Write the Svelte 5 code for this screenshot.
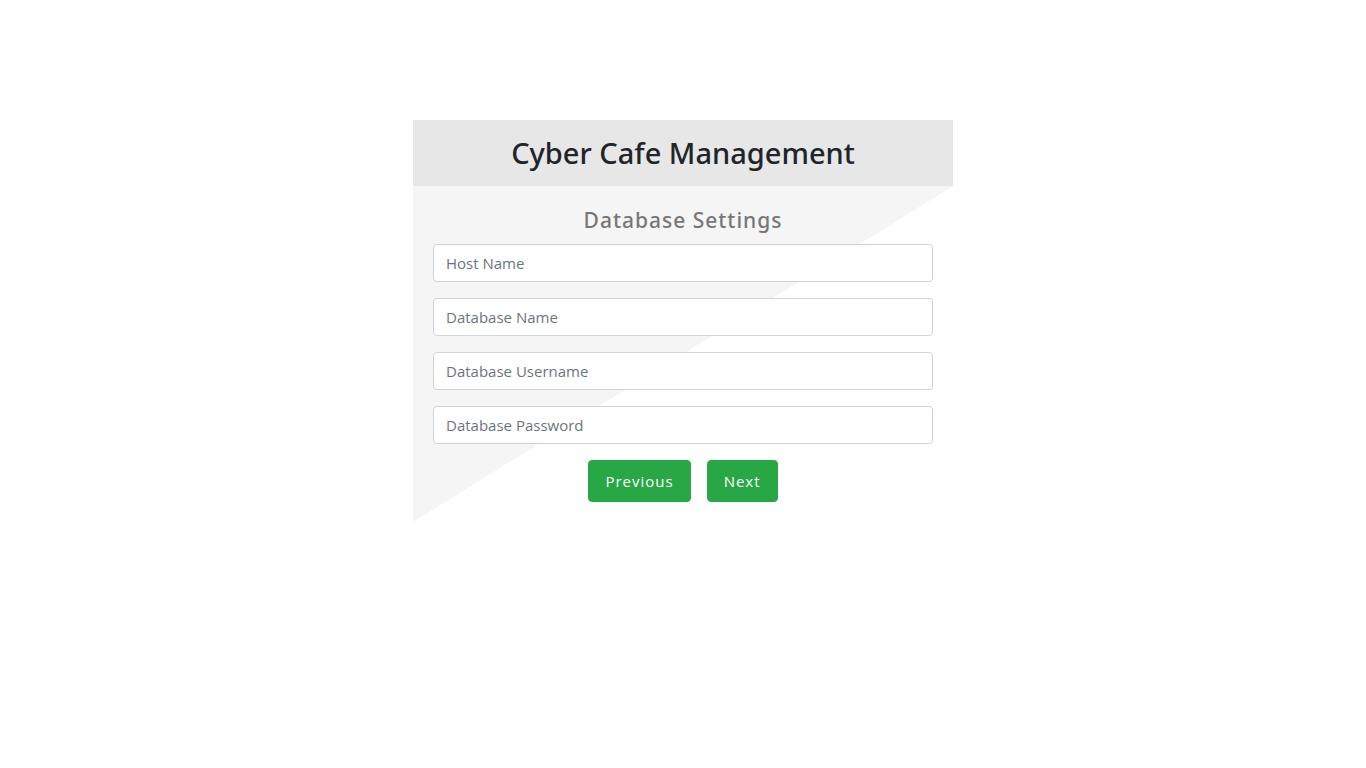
<script>
  const fields = [
    { id: 'host', label: 'Host Name', type: 'text' },
    { id: 'name', label: 'Database Name', type: 'text' },
    { id: 'username', label: 'Database Username', type: 'text' },
    { id: 'password', label: 'Database Password', type: 'password' }
  ];
</script>

<main>
  <section class="card">
    <header><h1>Cyber Cafe Management</h1></header>
    <form onsubmit={(e) => e.preventDefault()}>
      <h2>Database Settings</h2>
      {#each fields as field}
        <input id={field.id} type={field.type} placeholder={field.label} aria-label={field.label} autocomplete="off" />
      {/each}
      <div class="actions">
        <button type="button">Previous</button>
        <button type="submit">Next</button>
      </div>
    </form>
  </section>
</main>

<style>
  :global(body) {
    margin: 0;
    background: #fff;
  }
  main {
    padding: 120px 16px 0;
    font-family: "Segoe UI", "Open Sans", "Noto Sans", sans-serif;
    font-size: 15px;
    line-height: 24px;
    color: #212529;
  }
  .card {
    max-width: 540px;
    margin: 0 auto;
  }
  header {
    padding: 16px;
    background: #e7e7e7;
    text-align: center;
  }
  h1,
  h2 {
    font-family: "Segoe UI", "Noto Sans", "Open Sans", sans-serif;
    font-weight: 500;
  }
  h1 {
    margin: 0;
    font-size: 29px;
    line-height: 34px;
  }
  form {
    display: flex;
    flex-direction: column;
    gap: 16px;
    padding: 20px;
    background: linear-gradient(to bottom right, #f5f5f5 50%, #fff 50%);
  }
  h2 {
    margin: 0 0 -6px;
    font-size: 21px;
    line-height: 28px;
    letter-spacing: 1px;
    text-align: center;
    color: #777;
  }
  input {
    box-sizing: border-box;
    width: 100%;
    height: 38px;
    padding: 6px 12px;
    border: 1px solid #ced4da;
    border-radius: 4px;
    background: #fff;
    font: inherit;
    color: #495057;
  }
  input::placeholder {
    color: #6c757d;
    opacity: 1;
  }
  .actions {
    display: flex;
    justify-content: center;
    gap: 16px;
  }
  button {
    padding: 8px 16px;
    border: 1px solid #28a745;
    border-radius: 4px;
    background: #28a745;
    color: #fff;
    font: inherit;
    letter-spacing: 1px;
  }
</style>
